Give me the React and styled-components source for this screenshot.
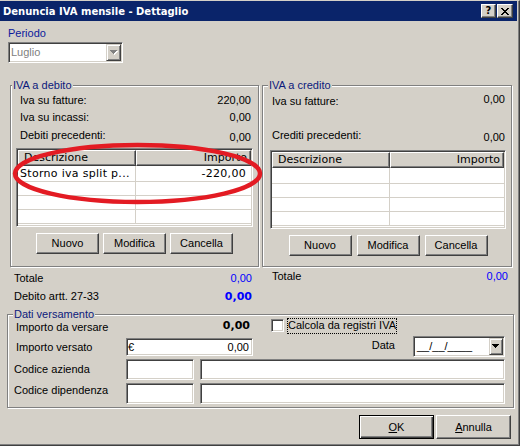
import React from 'react';
import styled, { createGlobalStyle } from 'styled-components';

const FONT = `"Liberation Sans", Arial, sans-serif`;
const VFONT = `"DejaVu Sans", Verdana, sans-serif`;

const Global = createGlobalStyle`
  html, body { margin: 0; padding: 0; background: #d4d0c8; }
  body { font-family: ${FONT}; font-size: 11px; }
`;

const Window = styled.div`
  position: relative;
  box-sizing: border-box;
  width: 520px;
  height: 446px;
  background: #d4d0c8;
  border-top: 1px solid #d4d0c8;
  border-right: 1px solid #404040;
  border-bottom: 1px solid #404040;
  padding: 0 1px 1px 0;
  box-shadow: inset -1px -1px #808080;
  display: flex;
  flex-direction: column;
  overflow: hidden;
  color: #000;
  font-family: ${FONT};
  font-size: 11px;
  line-height: 13px;
`;

const TitleBar = styled.div`
  height: 20px;
  margin-right: 1px;
  background: #0a246a;
  display: flex;
  align-items: center;
  justify-content: space-between;
  padding: 0 4px 0 3px;
`;

const TitleText = styled.span`
  color: #fff;
  font-family: ${VFONT};
  font-weight: bold;
  font-size: 10px;
  white-space: nowrap;
`;

const CaptionGroup = styled.div`
  display: flex;
  gap: 1px;
`;

const CaptionButton = styled.div`
  box-sizing: border-box;
  width: ${p => p.$w}px;
  height: 14px;
  background: #d4d0c8;
  border: 1px solid;
  border-color: #fff #404040 #404040 #fff;
  box-shadow: inset -1px -1px #808080;
  display: flex;
  align-items: center;
  justify-content: center;
  font-family: ${VFONT};
  font-weight: bold;
  font-size: 10px;
  line-height: 10px;
  color: #000;
`;

const PeriodSection = styled.div`
  margin: 6px 0 0 8px;
  display: flex;
  flex-direction: column;
  gap: 2px;
  align-items: flex-start;
`;

const Caption = styled.span`
  color: #0c1a9c;
`;

const Combo = styled.div`
  box-sizing: border-box;
  width: ${p => p.$w}px;
  height: ${p => p.$h}px;
  margin-top: ${p => p.$dy || 0}px;
  flex: 0 0 auto;
  background: #fff;
  border: 1px solid;
  border-color: #808080 #fff #fff #808080;
  box-shadow: inset 1px 1px #404040, inset -1px -1px #d4d0c8;
  padding: 1px;
  display: flex;
  align-items: stretch;
`;

const ComboText = styled.span`
  flex: 1;
  display: flex;
  align-items: center;
  padding-left: ${p => p.$pl || 1}px;
  color: ${p => (p.$disabled ? '#808080' : '#000')};
  white-space: nowrap;
`;

const DropButton = styled.div`
  box-sizing: border-box;
  width: ${p => p.$w}px;
  background: #d4d0c8;
  border: 1px solid;
  border-color: #d4d0c8 #404040 #404040 #d4d0c8;
  box-shadow: inset 1px 1px #fff, inset -1px -1px #808080;
  display: flex;
  align-items: center;
  justify-content: center;
`;

const Arrow = ({ disabled }) => (
  <svg width="8" height="5" viewBox="0 0 8 5" shapeRendering="crispEdges">
    {disabled && (
      <path d="M1 1h7v1h-1v1h-1v1h-1v1h-1v-1h-1v-1h-1v-1h-1z" fill="#fff" />
    )}
    <path
      d="M0 0h7v1h-1v1h-1v1h-1v1h-1v-1h-1v-1h-1v-1h-1z"
      fill={disabled ? '#808080' : '#000'}
    />
  </svg>
);

const Columns = styled.div`
  display: flex;
  gap: 3px;
  margin: 16px 0 0 10px;
  align-items: flex-start;
`;

const Column = styled.div`
  width: ${p => p.$w}px;
  display: flex;
  flex-direction: column;
`;

const Group = styled.fieldset`
  margin: 0 0 0 ${p => p.$ml || 0}px;
  padding: 0;
  min-width: 0;
  width: ${p => (p.$w ? p.$w + 'px' : 'auto')};
  box-sizing: border-box;
  border: 1px solid #808080;
  box-shadow: inset 1px 1px #fff, 1px 1px #fff;
`;

const Legend = styled.legend`
  margin-left: ${p => p.$ml}px;
  padding: 0 1px;
  line-height: 13px;
  background: #d4d0c8;
  color: #0c1a7c;
`;

const GroupBody = styled.div`
  display: flex;
  flex-direction: column;
  padding: 0 ${p => p.$pr}px ${p => p.$pb}px ${p => p.$pl}px;
`;

const StatRow = styled.div`
  box-sizing: border-box;
  height: ${p => p.$h}px;
  padding: ${p => p.$pt || 0}px ${p => p.$pr || 0}px 0 ${p => p.$pl || 0}px;
  display: flex;
  justify-content: space-between;
  align-items: flex-start;
`;

const Text = styled.span`
  margin-top: ${p => p.$dy || 0}px;
  white-space: nowrap;
  color: ${p => p.$color || '#000'};
`;

const BoldValue = styled.span`
  margin-top: ${p => p.$dy || 0}px;
  font-family: ${VFONT};
  font-weight: bold;
  font-size: 11px;
  color: ${p => p.$color || '#000'};
`;

const Grid = styled.div`
  box-sizing: border-box;
  margin-top: ${p => p.$mt}px;
  height: 79px;
  background: #fff;
  border: 1px solid;
  border-color: #808080 #fff #fff #808080;
  box-shadow: inset 1px 1px #404040, inset -1px -1px #d4d0c8;
  padding: 1px;
  font-family: ${VFONT};
  font-size: 11px;
  overflow: hidden;
`;

const GridRow = styled.div`
  display: grid;
  grid-template-columns: 118px 1fr;
  height: ${p => p.$h}px;
`;

const HeadCell = styled.div`
  box-sizing: border-box;
  background: #d4d0c8;
  border: 1px solid;
  border-color: #fff #404040 #404040 #fff;
  box-shadow: inset -1px -1px #808080;
  line-height: 14px;
  padding: 0 ${p => p.$pr || 0}px 0 ${p => p.$pl || 0}px;
  text-align: ${p => p.$align || 'left'};
  white-space: nowrap;
  overflow: hidden;
`;

const Cell = styled.div`
  box-sizing: border-box;
  border-bottom: 1px solid #d4d0c8;
  border-right: ${p => (p.$first ? '1px solid #d4d0c8' : 'none')};
  display: flex;
  align-items: center;
  justify-content: ${p => (p.$align === 'right' ? 'flex-end' : 'flex-start')};
  padding: 0 ${p => p.$pr || 0}px 0 ${p => p.$pl || 0}px;
  letter-spacing: 0.3px;
  white-space: nowrap;
  overflow: hidden;
`;

const ButtonRow = styled.div`
  display: flex;
  justify-content: ${p => p.$justify || 'center'};
  gap: ${p => p.$gap}px;
  margin-top: ${p => p.$mt}px;
  padding-right: ${p => p.$pr || 0}px;
`;

const Button = styled.div`
  box-sizing: border-box;
  width: ${p => p.$w}px;
  height: ${p => p.$h}px;
  background: #d4d0c8;
  border: 1px solid;
  border-color: ${p =>
    p.$default ? '#000' : '#fff #404040 #404040 #fff'};
  box-shadow: ${p =>
    p.$default
      ? 'inset 1px 1px #fff, inset -1px -1px #404040, inset -2px -2px #808080'
      : 'inset -1px -1px #808080'};
  display: flex;
  align-items: center;
  justify-content: center;
  white-space: nowrap;
`;

const Summary = styled.div`
  display: flex;
  flex-direction: column;
  padding: ${p => p.$pt}px ${p => p.$pr}px 0 ${p => p.$pl}px;
`;

const SumRow = styled.div`
  height: 18px;
  display: flex;
  justify-content: space-between;
  align-items: flex-start;
`;

const DatiBody = styled.div`
  display: flex;
  flex-direction: column;
  padding: 0 8px 3px 6px;
`;

const FormRow = styled.div`
  display: flex;
  align-items: flex-start;
  height: ${p => p.$h}px;
  margin-top: ${p => p.$mt}px;
`;

const Half = styled.div`
  width: 238px;
  box-sizing: border-box;
  display: flex;
  justify-content: space-between;
  align-items: flex-start;
  padding: 0 2px 0 2px;
  flex: 0 0 auto;
`;

const FormLabel = styled.span`
  box-sizing: border-box;
  width: ${p => (p.$w ? p.$w + 'px' : 'auto')};
  flex: 0 0 auto;
  padding-left: ${p => p.$pl || 0}px;
  margin-top: ${p => p.$dy || 0}px;
  margin-right: ${p => p.$mr || 0}px;
  margin-left: ${p => (p.$auto ? 'auto' : '0')};
  white-space: nowrap;
`;

const Input = styled.div`
  box-sizing: border-box;
  width: ${p => (p.$w ? p.$w + 'px' : 'auto')};
  flex: ${p => (p.$grow ? '1 1 auto' : '0 0 auto')};
  height: ${p => p.$h}px;
  margin-top: ${p => p.$dy || 0}px;
  margin-left: ${p => p.$ml || 0}px;
  background: #fff;
  border: 1px solid;
  border-color: #808080 #fff #fff #808080;
  box-shadow: inset 1px 1px #404040, inset -1px -1px #d4d0c8;
  padding: 1px 3px 1px 1px;
  display: flex;
  align-items: center;
  justify-content: space-between;
`;

const CheckBox = styled.div`
  box-sizing: border-box;
  width: 13px;
  height: 13px;
  margin: 1px 3px 0 19px;
  background: #fff;
  border: 1px solid;
  border-color: #808080 #fff #fff #808080;
  box-shadow: inset 1px 1px #404040, inset -1px -1px #d4d0c8;
`;

const FocusLabel = styled.span`
  border: 1px dotted #000;
  padding: 0 0 1px 0;
  line-height: 13px;
  white-space: nowrap;
`;

const Overlay = styled.svg`
  position: absolute;
  left: 0;
  top: 0;
  pointer-events: none;
`;

function Table({ mt, rows }) {
  return (
    <Grid $mt={mt}>
      <GridRow $h={16}>
        <HeadCell $pl={5}>Descrizione</HeadCell>
        <HeadCell $pr={3} $align="right">Importo</HeadCell>
      </GridRow>
      {[16, 14, 14, 14].map((h, i) => (
        <GridRow key={i} $h={h}>
          <Cell $first $pl={2}>{rows[i] ? rows[i][0] : ''}</Cell>
          <Cell $align="right" $pr={5}>{rows[i] ? rows[i][1] : ''}</Cell>
        </GridRow>
      ))}
    </Grid>
  );
}

function ActionButtons({ mt, gap }) {
  return (
    <ButtonRow $mt={mt} $gap={gap}>
      <Button $w={63} $h={21}>Nuovo</Button>
      <Button $w={63} $h={21}>Modifica</Button>
      <Button $w={63} $h={21}>Cancella</Button>
    </ButtonRow>
  );
}

export default function App() {
  return (
    <>
      <Global />
      <Window>
        <TitleBar>
          <TitleText>Denuncia IVA mensile - Dettaglio</TitleText>
          <CaptionGroup>
            <CaptionButton $w={15}>?</CaptionButton>
            <CaptionButton $w={16}>
              <svg width="8" height="7" viewBox="0 0 8 7" shapeRendering="crispEdges">
                <path
                  d="M0 0h2v1h1v1h2v-1h1v-1h2v1h-1v1h-1v1h-1v1h1v1h1v1h1v1h-2v-1h-1v-1h-2v1h-1v1h-2v-1h1v-1h1v-1h1v-1h-1v-1h-1v-1h-1z"
                  fill="#000"
                />
              </svg>
            </CaptionButton>
          </CaptionGroup>
        </TitleBar>

        <PeriodSection>
          <Caption>Periodo</Caption>
          <Combo $w={115} $h={21}>
            <ComboText $disabled>Luglio</ComboText>
            <DropButton $w={15}>
              <Arrow disabled />
            </DropButton>
          </Combo>
        </PeriodSection>

        <Columns>
          <Column $w={249}>
            <Group>
              <Legend $ml={1}>IVA a debito</Legend>
              <GroupBody $pl={5} $pr={5} $pb={12}>
                <StatRow $h={17} $pt={2} $pl={4} $pr={2}>
                  <Text>Iva su fatture:</Text>
                  <Text>220,00</Text>
                </StatRow>
                <StatRow $h={17} $pt={2} $pl={4} $pr={2}>
                  <Text>Iva su incassi:</Text>
                  <Text>0,00</Text>
                </StatRow>
                <StatRow $h={21} $pt={3} $pl={4} $pr={2}>
                  <Text>Debiti precedenti:</Text>
                  <Text $dy={2}>0,00</Text>
                </StatRow>
                <Table mt={1} rows={[['Storno iva split p...', '-220,00']]} />
                <ActionButtons mt={6} gap={4} />
              </GroupBody>
            </Group>
            <Summary $pt={5} $pl={4} $pr={7}>
              <SumRow>
                <Text>Totale</Text>
                <Text $color="#0000ff">0,00</Text>
              </SumRow>
              <SumRow>
                <Text>Debito artt. 27-33</Text>
                <BoldValue $color="#0000ff">0,00</BoldValue>
              </SumRow>
            </Summary>
          </Column>

          <Column $w={250}>
            <Group>
              <Legend $ml={5}>IVA a credito</Legend>
              <GroupBody $pl={7} $pr={5} $pb={10}>
                <StatRow $h={17} $pt={2} $pl={2} $pr={1}>
                  <Text $dy={1}>Iva su fatture:</Text>
                  <Text $dy={-1}>0,00</Text>
                </StatRow>
                <StatRow $h={17} />
                <StatRow $h={21} $pt={3} $pl={2} $pr={1}>
                  <Text>Crediti precedenti:</Text>
                  <Text $dy={2}>0,00</Text>
                </StatRow>
                <Table mt={3} rows={[]} />
                <ActionButtons mt={6} gap={5} />
              </GroupBody>
            </Group>
            <Summary $pt={3} $pl={10} $pr={4}>
              <SumRow>
                <Text>Totale</Text>
                <Text $color="#0000ff">0,00</Text>
              </SumRow>
            </Summary>
          </Column>
        </Columns>

        <Group $ml={7} $w={507}>
          <Legend $ml={5}>Dati versamento</Legend>
          <DatiBody>
            <FormRow $h={16} $mt={-3}>
              <Half>
                <FormLabel $dy={3}>Importo da versare</FormLabel>
                <BoldValue $dy={1}>0,00</BoldValue>
              </Half>
              <CheckBox />
              <FocusLabel>Calcola da registri IVA</FocusLabel>
            </FormRow>
            <FormRow $h={21} $mt={2}>
              <FormLabel $w={112} $pl={2} $dy={5}>Importo versato</FormLabel>
              <Input $w={127} $h={18} $dy={2}>
                <span>€</span>
                <span>0,00</span>
              </Input>
              <FormLabel $auto $dy={3} $mr={18}>Data</FormLabel>
              <Combo $w={92} $h={21}>
                <ComboText $pl={2}>__/__/____</ComboText>
                <DropButton $w={14}>
                  <Arrow />
                </DropButton>
              </Combo>
            </FormRow>
            <FormRow $h={21} $mt={2}>
              <FormLabel $w={112} $dy={4}>Codice azienda</FormLabel>
              <Input $w={68} $h={21} />
              <Input $grow $ml={6} $h={21} />
            </FormRow>
            <FormRow $h={21} $mt={3}>
              <FormLabel $w={112} $dy={1}>Codice dipendenza</FormLabel>
              <Input $w={68} $h={21} />
              <Input $grow $ml={6} $h={21} />
            </FormRow>
          </DatiBody>
        </Group>

        <ButtonRow $justify="flex-end" $gap={2} $mt={7} $pr={7}>
          <Button $w={75} $h={24} $default>
            <span><u>O</u>K</span>
          </Button>
          <Button $w={75} $h={24}>
            <span><u>A</u>nnulla</span>
          </Button>
        </ButtonRow>

        <Overlay width="520" height="446" viewBox="0 0 520 446">
          <ellipse
            cx="137.5"
            cy="172.5"
            rx="122.5"
            ry="28.5"
            fill="none"
            stroke="#e31b23"
            strokeWidth="4.5"
          />
        </Overlay>
      </Window>
    </>
  );
}
